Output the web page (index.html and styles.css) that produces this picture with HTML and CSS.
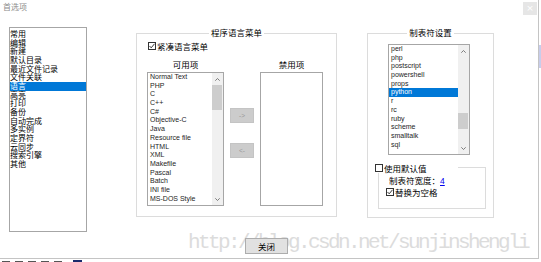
FILE: index.html
```html
<!DOCTYPE html>
<html lang="zh-CN">

<head>
    <meta charset="UTF-8">
    <title>首选项</title>
    <link rel="stylesheet" href="styles.css">
</head>

<body>
    <div class="screen">
        <div class="dialog">
            <div class="titlebar">
                <span class="title">首选项</span>
                <span class="close-btn">×</span>
            </div>

            <div class="content">
                <!-- Left navigation -->
                <ul class="nav-list">
                    <li>常用</li>
                    <li>编辑</li>
                    <li>新建</li>
                    <li>默认目录</li>
                    <li>最近文件记录</li>
                    <li>文件关联</li>
                    <li class="selected">语言</li>
                    <li>高亮</li>
                    <li>打印</li>
                    <li>备份</li>
                    <li>自动完成</li>
                    <li>多实例</li>
                    <li>定界符</li>
                    <li>云同步</li>
                    <li>搜索引擎</li>
                    <li>其他</li>
                </ul>

                <!-- Language menu group -->
                <div class="group group-lang">
                    <div class="group-title"><span>程序语言菜单</span></div>
                    <label class="check">
                        <span class="box"><svg width="6" height="6" viewBox="0 0 6 6"><polyline points="0.5,3 2.2,4.8 5.5,0.8" fill="none" stroke="#222" stroke-width="0.9"/></svg></span>紧凑语言菜单
                    </label>
                    <div class="lang-columns">
                        <div class="column">
                            <div class="col-label">可用项</div>
                            <div class="listbox list-available">
                                <ul class="items">
                                    <li>Normal Text</li>
                                    <li>PHP</li>
                                    <li>C</li>
                                    <li>C++</li>
                                    <li>C#</li>
                                    <li>Objective-C</li>
                                    <li>Java</li>
                                    <li>Resource file</li>
                                    <li>HTML</li>
                                    <li>XML</li>
                                    <li>Makefile</li>
                                    <li>Pascal</li>
                                    <li>Batch</li>
                                    <li>INI file</li>
                                    <li>MS-DOS Style</li>
                                </ul>
                                <div class="scrollbar">
                                    <span class="arrow"><svg width="5" height="3" viewBox="0 0 5 3"><polyline points="0.3,2.7 2.5,0.5 4.7,2.7" fill="none" stroke="#606060" stroke-width="0.8"/></svg></span>
                                    <span class="thumb thumb-available"></span>
                                    <span class="track"></span>
                                    <span class="arrow"><svg width="5" height="3" viewBox="0 0 5 3"><polyline points="0.3,0.3 2.5,2.5 4.7,0.3" fill="none" stroke="#606060" stroke-width="0.8"/></svg></span>
                                </div>
                            </div>
                        </div>
                        <div class="move-buttons">
                            <button class="move-btn">-&gt;</button>
                            <button class="move-btn">&lt;-</button>
                        </div>
                        <div class="column">
                            <div class="col-label">禁用项</div>
                            <div class="listbox list-disabled"></div>
                        </div>
                    </div>
                </div>

                <!-- Tab settings group -->
                <div class="group group-tab">
                    <div class="group-title"><span>制表符设置</span></div>
                    <div class="listbox list-tab">
                        <ul class="items">
                            <li>perl</li>
                            <li>php</li>
                            <li>postscript</li>
                            <li>powershell</li>
                            <li>props</li>
                            <li class="selected">python</li>
                            <li>r</li>
                            <li>rc</li>
                            <li>ruby</li>
                            <li>scheme</li>
                            <li>smalltalk</li>
                            <li>sql</li>
                        </ul>
                        <div class="scrollbar">
                            <span class="arrow"><svg width="5" height="3" viewBox="0 0 5 3"><polyline points="0.3,2.7 2.5,0.5 4.7,2.7" fill="none" stroke="#606060" stroke-width="0.8"/></svg></span>
                            <span class="thumb thumb-tab"></span>
                            <span class="track"></span>
                            <span class="arrow"><svg width="5" height="3" viewBox="0 0 5 3"><polyline points="0.3,0.3 2.5,2.5 4.7,0.3" fill="none" stroke="#606060" stroke-width="0.8"/></svg></span>
                        </div>
                    </div>

                    <div class="defaults">
                        <label class="check defaults-legend">
                            <span class="box"></span>使用默认值
                        </label>
                        <div class="tab-width">制表符宽度：<span class="link">4</span></div>
                        <label class="check">
                            <span class="box"><svg width="6" height="6" viewBox="0 0 6 6"><polyline points="0.5,3 2.2,4.8 5.5,0.8" fill="none" stroke="#222" stroke-width="0.9"/></svg></span>替换为空格
                        </label>
                    </div>
                </div>
            </div>

            <div class="footer">
                <button class="close-dialog">关闭</button>
            </div>

            <div class="watermark">http://blog.csdn.net/sunjinshengli</div>
        </div>

        <div class="page-scroll"><span class="page-thumb"></span></div>
    </div>
    <!-- the page behind the dialog only peeks out at the bottom -->
    <div class="page-below">
        <span class="frag"></span><span class="frag"></span><span class="frag"></span><span class="frag"></span><span class="frag"></span><span class="frag frag-dark"></span>
    </div>
</body>

</html>
```

FILE: styles.css
```css
* {
    box-sizing: border-box;
}

body {
    margin: 0;
    width: 541px;
    height: 262px;
    overflow: hidden;
    background-color: #fff;
    color: #000;
    font-family: "Noto Sans CJK SC", sans-serif;
    font-size: 8.5px;
}

.screen {
    display: flex;
}

.dialog {
    position: relative;
    width: 539px;
    height: 259px;
    display: flex;
    flex-direction: column;
    border-right: 1px solid #c4c4c4;
    border-bottom: 1px solid #c4c4c4;
}

/* Title bar */
.titlebar {
    height: 27px;
    display: flex;
    justify-content: space-between;
    align-items: flex-start;
}

.title {
    margin: 2px 0 0 3px;
    color: #8c8c8c;
    font-size: 8px;
    line-height: 10px;
}

.close-btn {
    width: 14px;
    height: 13px;
    margin: 2px 1px 0 0;
    background-color: #e6e6e6;
    color: #fff;
    font-family: "DejaVu Sans", sans-serif;
    font-size: 9px;
    line-height: 13px;
    text-align: center;
}

.content {
    display: flex;
    align-items: flex-start;
    padding-left: 9px;
}

/* Left navigation list */
.nav-list {
    width: 78px;
    height: 205px;
    margin: 0;
    padding: 2px 0 0;
    list-style: none;
    border: 1px solid #a6a6a6;
    font-size: 8px;
    line-height: 8.67px;
}

.nav-list li {
    height: 8.67px;
    white-space: nowrap;
}

.selected {
    background-color: #0078d7;
    color: #fff;
}

/* Group boxes */
.group {
    position: relative;
    margin-top: 6px;
    border: 1px solid #dcdcdc;
}

.group-title {
    position: absolute;
    top: -7px;
    left: 0;
    right: 0;
    text-align: center;
    line-height: 10px;
}

.group-title span {
    padding: 0 2px;
    background-color: #fff;
}

.group-lang {
    width: 201px;
    height: 184px;
    margin-left: 49px;
    padding: 7px 0 0 10px;
}

.group-tab {
    width: 127px;
    height: 185px;
    margin-left: 30px;
    padding: 10px 0 0 10px;
}

/* Checkboxes */
.check {
    display: flex;
    align-items: center;
    gap: 1px;
    height: 10px;
    line-height: 10px;
    white-space: nowrap;
}

.group-lang > .check {
    margin-left: 1px;
}

.box {
    width: 8px;
    height: 8px;
    display: flex;
    align-items: center;
    justify-content: center;
    border: 1px solid #333;
    background-color: #fff;
}

/* Language columns */
.lang-columns {
    display: flex;
    margin-top: 8px;
}

.col-label {
    height: 10px;
    margin-bottom: 3px;
    line-height: 10px;
    text-align: center;
}

.listbox {
    display: flex;
    overflow: hidden;
    border: 1px solid #a6a6a6;
    background-color: #fff;
}

.list-available {
    width: 77px;
    height: 134px;
}

.list-disabled {
    width: 63px;
    height: 134px;
}

.list-tab {
    width: 82px;
    height: 111px;
    margin-left: 10px;
}

.items {
    flex: 1;
    margin: 0;
    padding: 0;
    overflow: hidden;
    list-style: none;
    color: #1e1e1e;
    font-family: "Liberation Sans", sans-serif;
    font-size: 7px;
    line-height: 8.7px;
}

.items li {
    height: 8.7px;
    padding-left: 2px;
    white-space: nowrap;
}

.items .selected {
    color: #fff;
}

.scrollbar {
    width: 11px;
    display: flex;
    flex-direction: column;
    background-color: #f0f0f0;
}

.arrow {
    height: 12px;
    display: flex;
    align-items: center;
    justify-content: center;
}

.thumb {
    margin: 0 1px 0 0;
    background-color: #cdcdcd;
}

.thumb-available {
    height: 25px;
}

.thumb-tab {
    height: 16px;
    margin-top: 56px;
}

.track {
    flex: 1;
}

.move-buttons {
    display: flex;
    flex-direction: column;
    gap: 20px;
    padding: 49px 6px 0 6px;
}

.move-btn {
    width: 24px;
    height: 15px;
    padding: 0;
    border: 1px solid #c4c4c4;
    background-color: #cccccc;
    color: #999;
    font-family: "Liberation Sans", sans-serif;
    font-size: 6.5px;
    line-height: 13px;
}

/* Default value sub group */
.defaults {
    position: relative;
    width: 108px;
    height: 42px;
    margin-top: 12px;
    padding: 7px 0 0 7px;
    border: 1px solid #dcdcdc;
}

.defaults-legend {
    position: absolute;
    top: -5px;
    left: -4px;
    width: 83px;
    background-color: #fff;
}

.tab-width {
    height: 12px;
    margin-left: 3px;
    line-height: 10px;
}

.link {
    color: #0000ee;
    text-decoration: underline;
    font-family: "Liberation Sans", sans-serif;
}

/* Footer */
.footer {
    padding: 6px 0 0 245px;
}

.close-dialog {
    position: relative;
    z-index: 2;
    width: 43px;
    height: 16px;
    padding: 0;
    border: 1px solid #adadad;
    background-color: #e1e1e1;
    color: #000;
    font-family: "Noto Sans CJK SC", sans-serif;
    font-size: 8.5px;
}

.watermark {
    position: absolute;
    z-index: 1;
    left: 188px;
    top: 232px;
    color: #dcdcdc;
    font-family: "Liberation Mono", monospace;
    font-size: 21px;
    letter-spacing: -2.6px;
    line-height: 22px;
    white-space: nowrap;
    pointer-events: none;
}

/* Bits of the page behind the dialog */
.page-scroll {
    width: 2px;
    padding-top: 45px;
}

.page-thumb {
    display: block;
    height: 23px;
    background-color: #c8cdeb;
}

.page-below {
    height: 3px;
    display: flex;
    align-items: flex-end;
    gap: 5px;
    padding: 0 0 0 2px;
}

.frag {
    width: 8px;
    height: 1px;
    background-color: #555;
}

.frag-dark {
    width: 9px;
    height: 2px;
    margin-left: 6px;
    background-color: #1a2a6c;
}
```
